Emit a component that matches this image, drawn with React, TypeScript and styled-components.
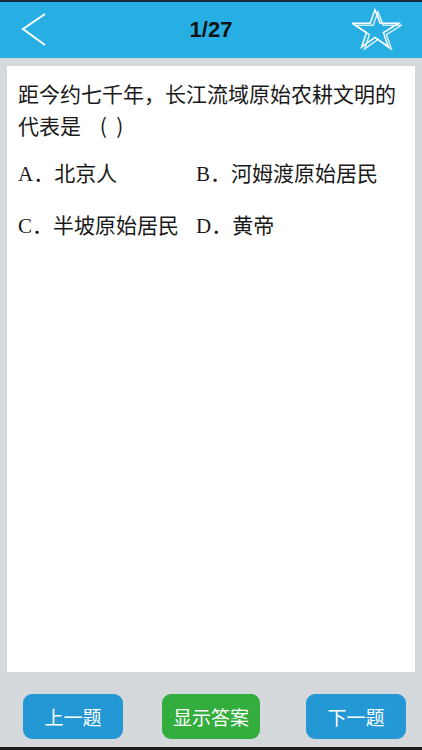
import React from "react";
import styled, { createGlobalStyle } from "styled-components";

const GlobalStyle = createGlobalStyle`
  html, body { margin: 0; padding: 0; }
  body {
    width: 422px;
    height: 750px;
    overflow: hidden;
    background: #d5d9dc;
    font-family: "Noto Sans CJK SC", "Noto Sans", sans-serif;
  }
`;

const Screen = styled.div`
  width: 422px;
  height: 750px;
  display: flex;
  flex-direction: column;
  background: #d5d9dc;
  border-top: 2px solid #1b2a3a;
  border-bottom: 3px solid #1b1b1b;
  box-sizing: border-box;
`;

const Header = styled.header`
  height: 56px;
  flex: none;
  background: #27afe4;
  display: flex;
  align-items: center;
  justify-content: space-between;
  padding: 0 20px 0 20px;
  position: relative;
`;

const Title = styled.h1`
  position: absolute;
  left: 0;
  right: 0;
  margin: 0;
  text-align: center;
  font-family: "Liberation Sans", Arial, sans-serif;
  font-weight: bold;
  font-size: 22px;
  color: #111;
  pointer-events: none;
`;

const IconButton = styled.button`
  background: none;
  border: none;
  padding: 0;
  display: flex;
  align-items: center;
  justify-content: center;
`;

const Card = styled.main`
  flex: 1;
  margin: 8px 7px 0 7px;
  background: #ffffff;
  padding: 11px 11px 0 11px;
  box-sizing: border-box;
`;

const Question = styled.p`
  margin: 0;
  font-family: "Noto Sans CJK SC", sans-serif;
  font-size: 21px;
  line-height: 32px;
  color: #1a1a1a;
  white-space: pre-wrap;
  line-break: anywhere;
`;

const Options = styled.div`
  margin-top: 15px;
  display: grid;
  grid-template-columns: 178px 1fr;
  row-gap: 18px;
`;

const Option = styled.div`
  font-family: "Liberation Serif", "Noto Sans CJK SC", serif;
  font-size: 21px;
  line-height: 32px;
  color: #1a1a1a;
  white-space: nowrap;
`;

const Label = styled.span`
  font-family: "Liberation Serif", serif;
`;

const Dot = styled.span`
  font-family: "Noto Sans CJK SC", sans-serif;
`;

const Cn = styled.span`
  font-family: "Noto Sans CJK SC", sans-serif;
`;

const Footer = styled.footer`
  height: 75px;
  flex: none;
  display: flex;
  align-items: flex-start;
  gap: 39px;
  padding: 22px 16px 0 23px;
  box-sizing: border-box;
`;

const NavButton = styled.button<{ $green?: boolean; $end?: boolean }>`
  width: ${(p) => (p.$green ? "98px" : "100px")};
  height: 45px;
  border: none;
  border-radius: 9px;
  background: ${(p) => (p.$green ? "#33ad3d" : "#2497d5")};
  color: #ffffff;
  font-family: "Noto Sans CJK SC", sans-serif;
  font-size: 19px;
  padding: 0;
  margin-left: ${(p) => (p.$end ? "auto" : "0")};
`;

const options = [
  { l: "A", t: "北京人" },
  { l: "B", t: "河姆渡原始居民" },
  { l: "C", t: "半坡原始居民" },
  { l: "D", t: "黄帝" },
];

const questionText = "距今约七千年，长江流域原始农耕文明的代表是    (  )";

const Star = () => (
  <svg width="50" height="46" viewBox="0 0 50 46" fill="none" stroke="#fff" strokeWidth="1.6" strokeLinejoin="miter">
    <polygon points="21,3 26.5,17 46,17 30,27 35,42 21,32 7,42 12,27 -3,17 16,17" transform="translate(3,0) scale(0.95)" />
    <polygon points="21,3 26.5,17 46,17 30,27 35,42 21,32 7,42 12,27 -3,17 16,17" transform="translate(6,2) scale(0.95)" opacity="0.8" />
  </svg>
);

export default function App() {
  return (
    <>
      <GlobalStyle />
      <Screen>
        <Header>
          <IconButton aria-label="back">
            <svg width="30" height="36" viewBox="0 0 30 36" fill="none">
              <polyline points="25,2 3,17 25,33" stroke="#fff" strokeWidth="2" fill="none" />
            </svg>
          </IconButton>
          <Title>1/27</Title>
          <IconButton aria-label="favorite">
            <Star />
          </IconButton>
        </Header>
        <Card>
          <Question>{questionText}</Question>
          <Options>
            {options.map((o) => (
              <Option key={o.l}>
                <Label>{o.l}</Label>
                <Dot>．</Dot>
                <Cn>{o.t}</Cn>
              </Option>
            ))}
          </Options>
        </Card>
        <Footer>
          <NavButton>上一题</NavButton>
          <NavButton $green>显示答案</NavButton>
          <NavButton $end>下一题</NavButton>
        </Footer>
      </Screen>
    </>
  );
}
